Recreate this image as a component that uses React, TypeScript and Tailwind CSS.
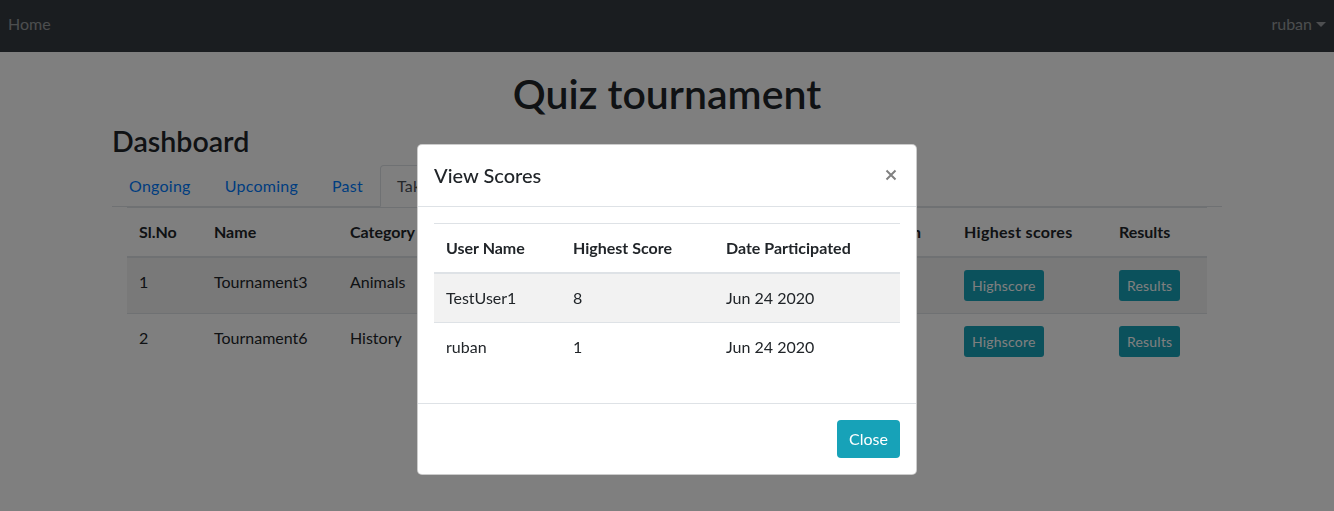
import React from "react";

const font = { fontFamily: 'Lato, "Open Sans", sans-serif' };

export default function App() {
  const rows = [
    { no: "1", name: "Tournament3", cat: "Animals" },
    { no: "2", name: "Tournament6", cat: "History" },
  ];
  const th = "px-3 py-3 border-t border-b-2 border-[#dee2e6] font-bold align-bottom";
  const td = "px-3 py-3 border-t border-[#dee2e6] align-top";
  return (
    <div className="min-h-[511px] bg-white text-[#212529] text-base" style={font}>
      <nav className="h-[52px] pb-[4px] bg-[#343a40] flex items-center justify-between">
        <a className="px-2 text-[rgba(255,255,255,0.5)]">Home</a>
        <a className="px-2 text-[rgba(255,255,255,0.5)] flex items-center">
          ruban
          <span className="ml-[4px] w-0 h-0 border-l-[5px] border-r-[5px] border-t-[5px] border-l-transparent border-r-transparent border-t-[rgba(255,255,255,0.5)]"></span>
        </a>
      </nav>
      <div className="w-[1140px] mx-auto px-[15px]">
        <h1 className="text-[41px] font-semibold leading-[48px] text-center mt-[18px] mb-[4px]">Quiz tournament</h1>
        <h2 className="text-[28.6px] font-semibold leading-[38px] mb-[5px]">Dashboard</h2>
        <div className="flex border-b border-[#dee2e6] tracking-[0.25px]">
          {["Ongoing", "Upcoming", "Past"].map((t) => (
            <a key={t} className="px-4 pt-2 pb-2 text-[#007bff] border border-transparent -mb-px">{t}</a>
          ))}
          <a className="px-4 pt-2 pb-2 text-[#495057] border border-[#dee2e6] border-b-white rounded-t-[4px] -mb-px bg-white">Taken</a>
        </div>
        <div className="px-[15px]">
          <table className="w-full border-collapse text-left">
            <thead>
              <tr>
                <th className={"w-[75px] " + th}>Sl.No</th>
                <th className={"w-[136px] " + th}>Name</th>
                <th className={"w-[160px] " + th}>Category</th>
                <th className={"w-[180px] " + th}></th>
                <th className={"w-[154px] " + th}></th>
                <th className={"w-[120px] text-right pr-[31px] " + th}>Duration</th>
                <th className={"w-[155px] tracking-[0.3px] " + th}>Highest scores</th>
                <th className={th}>Results</th>
              </tr>
            </thead>
            <tbody>
              {rows.map((r, i) => (
                <tr key={r.no} className={i === 0 ? "bg-[rgba(0,0,0,0.05)]" : ""}>
                  <td className={td}>{r.no}</td>
                  <td className={td}>{r.name}</td>
                  <td className={td}>{r.cat}</td>
                  <td className={td}></td>
                  <td className={td}></td>
                  <td className={td}></td>
                  <td className={td}>
                    <button className="h-[31px] px-2 text-sm tracking-[0.2px] rounded-[3px] bg-[#17a2b8] text-white">Highscore</button>
                  </td>
                  <td className={td}>
                    <button className="h-[31px] px-2 text-sm tracking-[0.2px] rounded-[3px] bg-[#17a2b8] text-white">Results</button>
                  </td>
                </tr>
              ))}
            </tbody>
          </table>
        </div>
      </div>

      <div className="fixed inset-0 bg-black/50"></div>

      <div className="fixed top-[144px] left-1/2 -translate-x-1/2 w-[500px] bg-white border border-[rgba(0,0,0,0.2)] rounded-[5px]">
        <div className="flex items-center justify-between px-4 pt-[15px] pb-[16px] border-b border-[#dee2e6]">
          <h5 className="text-xl font-medium leading-[1.5]">View Scores</h5>
          <svg width="12" height="12" viewBox="0 0 12 12" className="mr-[3px]">
            <path d="M1.5 1.5 L10.5 10.5 M10.5 1.5 L1.5 10.5" stroke="#808080" strokeWidth="2" />
          </svg>
        </div>
        <div className="p-4">
          <table className="w-full border-collapse mb-4 text-left">
            <thead>
              <tr>
                <th className={"w-[127px] " + th}>User Name</th>
                <th className={"w-[153px] " + th}>Highest Score</th>
                <th className={th}>Date Participated</th>
              </tr>
            </thead>
            <tbody>
              <tr className="bg-[rgba(0,0,0,0.05)]">
                <td className={td}>TestUser1</td>
                <td className={td}>8</td>
                <td className={td}>Jun 24 2020</td>
              </tr>
              <tr>
                <td className={td}>ruban</td>
                <td className={td}>1</td>
                <td className={td}>Jun 24 2020</td>
              </tr>
            </tbody>
          </table>
        </div>
        <div className="flex justify-end p-4 border-t border-[#dee2e6]">
          <button className="h-[38px] px-3 rounded-[4px] bg-[#17a2b8] text-white">Close</button>
        </div>
      </div>
    </div>
  );
}
